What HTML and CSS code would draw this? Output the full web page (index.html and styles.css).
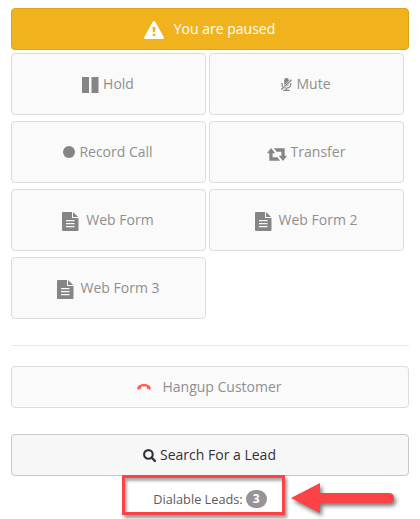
FILE: index.html
```html
<!DOCTYPE html>
<html lang="en">
<head>
<meta charset="utf-8">
<title>Call controls</title>
<link rel="stylesheet" href="styles.css">
</head>
<body>
<svg class="defs" aria-hidden="true">
  <symbol id="file" viewBox="0 0 17 19"><path fill-rule="evenodd" d="M1 0H10V6H16.5V18Q16.5 19 15.5 19H1Q0 19 0 18V1Q0 0 1 0ZM4 8V9.2H12.5V8ZM4 11V12.2H12.5V11ZM4 14V15.2H12.5V14Z"/><path d="M11 0L16.2 5.1H11Z"/></symbol>
</svg>
<main class="panel">
  <button class="btn banner"><svg class="warn" viewBox="0 0 20 18"><path fill-rule="evenodd" d="M8.8.8Q10-.7 11.2.8L19.7 16Q20.4 18 18.5 18H1.5Q-.4 18 .3 16ZM8.5 6L8.9 11.2H11.1L11.5 6ZM8.7 12.7V15H11.3V12.7Z"/></svg><span>You are paused</span></button>
  <div class="grid">
    <button class="btn"><svg class="pause" viewBox="0 0 17 16"><path d="M0 0H7V16H0ZM9.5 0H16.5V16H9.5Z"/></svg><span>Hold</span></button>
    <button class="btn"><svg class="mic" viewBox="0 0 11 13"><rect x="3.2" y="0" width="4.6" height="8.3" rx="2.3"/><path d="M1 5V6.5Q1 10 5.4 10Q9.7 10 9.7 6.5V5M5.4 10V12.4M2.2 12.4H8.6" fill="none" stroke="#858585" stroke-width="1.2"/><path d="M.3 11.6L10.5 1.8" stroke="#fafafa" stroke-width="2.4"/><path d="M.3 11.6L10.5 1.8" stroke="#858585" stroke-width="1.3"/></svg><span>Mute</span></button>
    <button class="btn"><svg class="dot" viewBox="0 0 12 12"><circle cx="6" cy="6" r="6"/></svg><span>Record Call</span></button>
    <button class="btn"><svg class="swap" viewBox="0 0 20 13"><path d="M4 0L8.2 5.2H5.6V9.3H10.5L13 12.7H2.3V5.2H0ZM7 .3H17.7V7.8H20L16 13L11.8 7.8H14.4V3.7H9.5Z"/></svg><span>Transfer</span></button>
    <button class="btn form"><svg class="file"><use href="#file"/></svg><span>Web Form</span></button>
    <button class="btn form"><svg class="file"><use href="#file"/></svg><span>Web Form 2</span></button>
    <button class="btn form"><svg class="file"><use href="#file"/></svg><span>Web Form 3</span></button>
  </div>
  <hr>
  <button class="btn hangup"><svg class="phone" viewBox="0 0 14 6"><path d="M.3 5.2C-.3 2.1 3 0 7 0S14.3 2.1 13.7 5.2Q13.5 5.8 12.8 5.6L10.5 5Q9.9 4.8 9.9 4V2.8Q7 1.8 4.1 2.8V4Q4.1 4.8 3.5 5L1.2 5.6Q.5 5.8 .3 5.2Z"/></svg><span>Hangup Customer</span></button>
  <button class="btn search"><svg class="lens" viewBox="0 0 13 13"><circle cx="5.4" cy="5.4" r="4.3" fill="none" stroke="#332f3a" stroke-width="2.1"/><path d="M8.5 8.5L12 12" stroke="#332f3a" stroke-width="2.4" stroke-linecap="round"/></svg><span>Search For a Lead</span></button>
  <div class="leads"><span>Dialable Leads:</span><span class="badge">3</span>
    <div class="highlight"></div>
    <svg class="arrow" viewBox="0 0 112 40"><path d="M2 17L31 2V12H100Q105 12 105 17T100 22H31V32Z"/></svg>
  </div>
</main>
</body>
</html>
```
FILE: styles.css
```css
* { box-sizing: border-box; }
body { margin: 0; background: #fff; font: 14px/20px "Open Sans", sans-serif; overflow: hidden; }
.defs { position: absolute; width: 0; height: 0; }
.panel { padding: 8px 11px 0; height: 519px; overflow: hidden; }
.btn {
  display: flex; align-items: center; justify-content: center; gap: 4px;
  width: 100%; height: 62px; padding: 0 1px 0 0; margin: 0;
  border: 1px solid #dcdcdc; border-radius: 4px;
  background: #fafafa; color: #8f8f8f; font: inherit; white-space: nowrap;
}
.btn svg { fill: #858585; flex: none; }
.banner { height: 42px; gap: 10px; background: #f0b31e; border-color: #dda31a; color: #fff; }
.banner .warn { fill: #fff; width: 20px; height: 18px; margin-top: 1px; }
.grid { display: grid; grid-template-columns: 195px 195px; gap: 6px 3px; margin-top: 3px; }
.pause { width: 17px; height: 16px; margin-top: 2px; }
.mic { width: 11px; height: 13px; }
.dot { width: 12px; height: 12px; }
.swap { width: 20px; height: 13px; margin-top: 4px; }
.form { gap: 7px; }
.file { width: 17px; height: 19px; margin-top: 3px; }
hr { height: 1px; margin: 26px 0 20px; border: 0; background: #e9e9e9; }
.hangup { height: 42px; gap: 11px; }
.hangup .phone { width: 14px; height: 6px; fill: #fb605b; }
.search { height: 42px; margin-top: 26px; background: #f7f7f7; border-color: #c8c8c8; color: #332f3a; }
.search .lens { width: 13px; height: 13px; }
.leads { position: relative; display: flex; justify-content: center; align-items: center; gap: 3px; height: 18px; margin-top: 14px; color: #5d595e; font-size: 12.75px; }
.badge { width: 21px; height: 18px; border-radius: 9px; background: #989398; color: #fff; font-size: 12px; font-weight: 700; line-height: 17px; text-align: center; }
.highlight { position: absolute; left: 111px; top: -15px; width: 163px; height: 40px; border: 3px solid #fb4346; box-shadow: 2px 3px 3px #0006, inset 2px 3px 3px #0005; }
.arrow { position: absolute; left: 278px; top: -9px; width: 112px; height: 40px; fill: #fb4346; filter: drop-shadow(2px 3px 2px #0008); }
```
